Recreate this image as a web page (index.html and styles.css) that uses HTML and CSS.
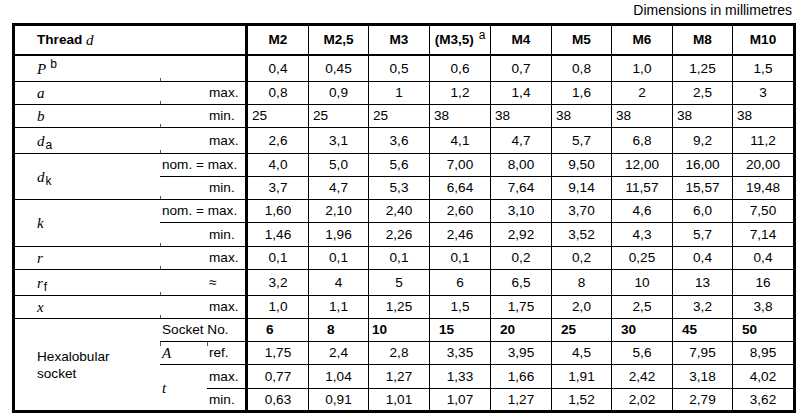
FILE: index.html
```html
<!DOCTYPE html>
<html lang="en">
<head>
<meta charset="utf-8">
<title>Dimensions</title>
<link rel="stylesheet" href="styles.css">
</head>
<body>
<p class="caption">Dimensions in millimetres</p>
<div class="spec">
  <div class="row head">
    <div class="c th">Thread&nbsp;<i class="it">d</i></div>
    <div class="c v">M2</div><div class="c v">M2,5</div><div class="c v">M3</div>
    <div class="c v">(M3,5)&nbsp;<span class="sup tight">a</span></div>
    <div class="c v">M4</div><div class="c v">M5</div><div class="c v">M6</div><div class="c v">M8</div><div class="c v">M10</div>
  </div>
  <div class="row">
    <div class="c sym full"><i class="it">P</i><span class="sup">b</span></div>
    <div class="c v">0,4</div><div class="c v">0,45</div><div class="c v">0,5</div><div class="c v">0,6</div><div class="c v">0,7</div><div class="c v">0,8</div><div class="c v">1,0</div><div class="c v">1,25</div><div class="c v">1,5</div>
  </div>
  <div class="row">
    <div class="c sym"><i class="it">a</i></div>
    <div class="c qual">max.</div>
    <div class="c v">0,8</div><div class="c v">0,9</div><div class="c v">1</div><div class="c v">1,2</div><div class="c v">1,4</div><div class="c v">1,6</div><div class="c v">2</div><div class="c v">2,5</div><div class="c v">3</div>
  </div>
  <div class="row left">
    <div class="c sym"><i class="it">b</i></div>
    <div class="c qual">min.</div>
    <div class="c v">25</div><div class="c v">25</div><div class="c v">25</div><div class="c v">38</div><div class="c v">38</div><div class="c v">38</div><div class="c v">38</div><div class="c v">38</div><div class="c v">38</div>
  </div>
  <div class="row">
    <div class="c sym"><i class="it">d</i><span class="sub">a</span></div>
    <div class="c qual">max.</div>
    <div class="c v">2,6</div><div class="c v">3,1</div><div class="c v">3,6</div><div class="c v">4,1</div><div class="c v">4,7</div><div class="c v">5,7</div><div class="c v">6,8</div><div class="c v">9,2</div><div class="c v">11,2</div>
  </div>
  <div class="row">
    <div class="c sym span2"><i class="it">d</i><span class="sub">k</span></div>
    <div class="c qual wide">nom. = max.</div>
    <div class="c v">4,0</div><div class="c v">5,0</div><div class="c v">5,6</div><div class="c v">7,00</div><div class="c v">8,00</div><div class="c v">9,50</div><div class="c v">12,00</div><div class="c v">16,00</div><div class="c v">20,00</div>
  </div>
  <div class="row">
    <div class="c qual">min.</div>
    <div class="c v">3,7</div><div class="c v">4,7</div><div class="c v">5,3</div><div class="c v">6,64</div><div class="c v">7,64</div><div class="c v">9,14</div><div class="c v">11,57</div><div class="c v">15,57</div><div class="c v">19,48</div>
  </div>
  <div class="row">
    <div class="c sym span2"><i class="it">k</i></div>
    <div class="c qual wide">nom. = max.</div>
    <div class="c v">1,60</div><div class="c v">2,10</div><div class="c v">2,40</div><div class="c v">2,60</div><div class="c v">3,10</div><div class="c v">3,70</div><div class="c v">4,6</div><div class="c v">6,0</div><div class="c v">7,50</div>
  </div>
  <div class="row">
    <div class="c qual">min.</div>
    <div class="c v">1,46</div><div class="c v">1,96</div><div class="c v">2,26</div><div class="c v">2,46</div><div class="c v">2,92</div><div class="c v">3,52</div><div class="c v">4,3</div><div class="c v">5,7</div><div class="c v">7,14</div>
  </div>
  <div class="row">
    <div class="c sym"><i class="it">r</i></div>
    <div class="c qual">max.</div>
    <div class="c v">0,1</div><div class="c v">0,1</div><div class="c v">0,1</div><div class="c v">0,1</div><div class="c v">0,2</div><div class="c v">0,2</div><div class="c v">0,25</div><div class="c v">0,4</div><div class="c v">0,4</div>
  </div>
  <div class="row">
    <div class="c sym"><i class="it">r</i><span class="sub">f</span></div>
    <div class="c qual">&#8776;</div>
    <div class="c v">3,2</div><div class="c v">4</div><div class="c v">5</div><div class="c v">6</div><div class="c v">6,5</div><div class="c v">8</div><div class="c v">10</div><div class="c v">13</div><div class="c v">16</div>
  </div>
  <div class="row">
    <div class="c sym"><i class="it">x</i></div>
    <div class="c qual">max.</div>
    <div class="c v">1,0</div><div class="c v">1,1</div><div class="c v">1,25</div><div class="c v">1,5</div><div class="c v">1,75</div><div class="c v">2,0</div><div class="c v">2,5</div><div class="c v">3,2</div><div class="c v">3,8</div>
  </div>
  <div class="row socket">
    <div class="c hex">Hexalobular<br>socket</div>
    <div class="c qual wide">Socket No.</div>
    <div class="c v sk-a">6</div><div class="c v sk-a">8</div><div class="c v sk-b">10</div><div class="c v">15</div><div class="c v">20</div><div class="c v">25</div><div class="c v">30</div><div class="c v">45</div><div class="c v">50</div>
  </div>
  <div class="row">
    <div class="c sub-sym tick-top"><i class="it">A</i></div>
    <div class="c sub-q tick-top">ref.</div>
    <div class="c v">1,75</div><div class="c v">2,4</div><div class="c v">2,8</div><div class="c v">3,35</div><div class="c v">3,95</div><div class="c v">4,5</div><div class="c v">5,6</div><div class="c v">7,95</div><div class="c v">8,95</div>
  </div>
  <div class="row">
    <div class="c sub-sym span2 open"><i class="it">t</i></div>
    <div class="c sub-q">max.</div>
    <div class="c v">0,77</div><div class="c v">1,04</div><div class="c v">1,27</div><div class="c v">1,33</div><div class="c v">1,66</div><div class="c v">1,91</div><div class="c v">2,42</div><div class="c v">3,18</div><div class="c v">4,02</div>
  </div>
  <div class="row last">
    <div class="c sub-q">min.</div>
    <div class="c v">0,63</div><div class="c v">0,91</div><div class="c v">1,01</div><div class="c v">1,07</div><div class="c v">1,27</div><div class="c v">1,52</div><div class="c v">2,02</div><div class="c v">2,79</div><div class="c v">3,62</div>
  </div>
</div>
</body>
</html>
```

FILE: styles.css
```css
html, body {
  margin: 0;
  padding: 0;
  background: #fff;
}

body {
  font-family: "Liberation Sans", Arial, sans-serif;
  font-size: 14px;
  color: #000;
}

.caption {
  margin: 0;
  height: 21px;
  padding: 2px 5px 0 0;
  line-height: 16px;
  text-align: right;
}

.spec {
  display: grid;
  grid-template-columns: 145px 47px 41px 61px 60px 61px 61px 61px 60px 61px 60px 60px;
  grid-template-rows: 30px 26px 23px 23px 26px 23px 23px 23px 24px 23px 26px 23px 23px 23px 24px 21px;
  width: max-content;
  margin-left: 12px;
  border: 3px solid #000;
  font-size: 13.6px;
}

.row {
  display: contents;
}

.c {
  position: relative;
  box-sizing: border-box;
  display: flex;
  align-items: center;
  border-right: 1px solid #000;
  border-bottom: 1px solid #000;
  white-space: nowrap;
  line-height: 16px;
}

.row > .v:last-child {
  border-right: 0;
}

.v {
  justify-content: center;
}

.head > .c {
  border-bottom-width: 2px;
  font-weight: bold;
}

.th {
  grid-column: span 3;
  border-right-width: 3px;
  padding-left: 22px;
}

.it {
  font-family: "Liberation Serif", "Times New Roman", serif;
  font-style: italic;
  font-weight: normal;
  font-size: 15px;
}

.sup {
  font-weight: normal;
  font-size: 12px;
  position: relative;
  top: -5px;
  margin-left: 4px;
}

.sup.tight {
  margin-left: 1px;
}

.sub {
  font-size: 12px;
  position: relative;
  top: 4px;
  margin-left: 1px;
}

.sym {
  grid-column: 1;
  border-right: 0;
  padding-left: 22px;
}

/* small construction ticks where the column rule meets the row rule */
.sym::after {
  content: "";
  position: absolute;
  right: -1px;
  bottom: 0;
  width: 1px;
  height: 3px;
  background: #555;
}

.sym.full {
  grid-column: span 3;
  border-right: 3px solid #000;
}

.sym.full::after {
  right: auto;
  left: 145px;
}

.tick-top::before {
  content: "";
  position: absolute;
  left: 0;
  top: 0;
  width: 1px;
  height: 4px;
  background: #555;
}

.span2 {
  grid-row: span 2;
}

.qual {
  grid-column: span 2;
  border-right-width: 3px;
  padding-left: 49px;
}

.qual.wide {
  padding-left: 2px;
}

.left > .v {
  justify-content: flex-start;
  padding-left: 4px;
}

.socket > .v {
  justify-content: flex-start;
  padding-left: 9px;
  font-weight: bold;
}

.socket > .v.sk-a {
  padding-left: 18px;
}

.socket > .v.sk-b {
  padding-left: 3px;
}

.hex {
  grid-row: span 4;
  border-right: 0;
  border-bottom: 0;
  padding-left: 22px;
  line-height: 17px;
}

.sub-sym {
  border-right: 0;
  padding-left: 2px;
}

.sub-sym.open {
  border-bottom: 0;
}

.sub-q {
  border-right-width: 3px;
  padding-left: 2px;
}

.last > .c {
  border-bottom: 0;
}
```
